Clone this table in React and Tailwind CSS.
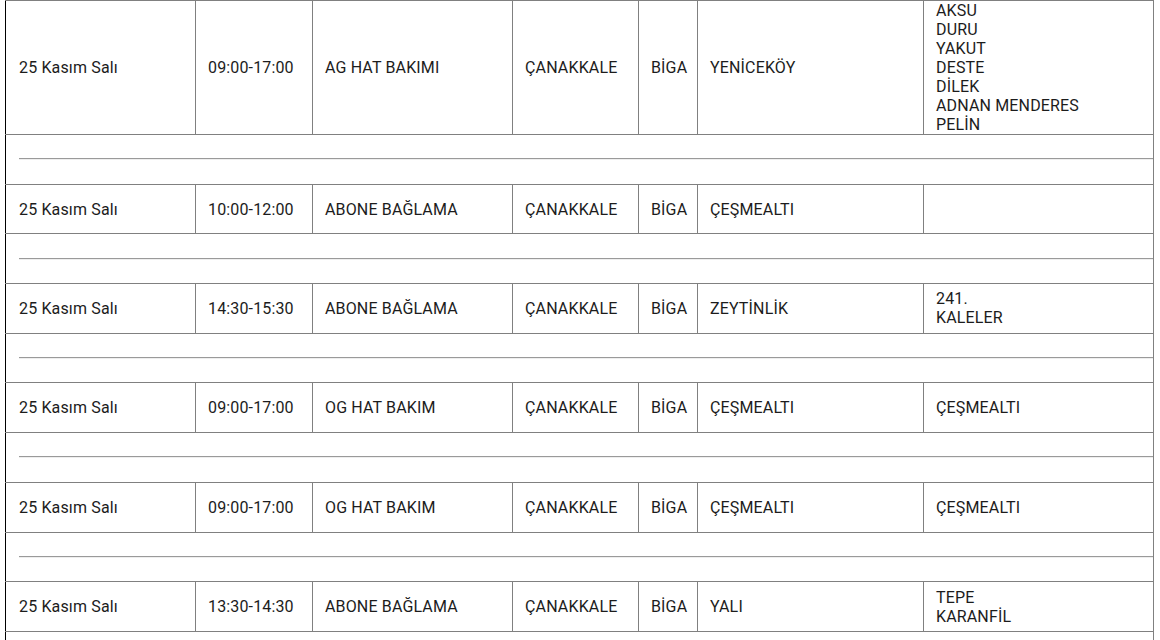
import React from "react";

const rows = [
  {
    tarih: "25 Kasım Salı",
    saat: "09:00-17:00",
    islem: "AG HAT BAKIMI",
    il: "ÇANAKKALE",
    ilce: "BİGA",
    mahalle: "YENİCEKÖY",
    sokaklar: ["AKSU", "DURU", "YAKUT", "DESTE", "DİLEK", "ADNAN MENDERES", "PELİN"],
  },
  {
    tarih: "25 Kasım Salı",
    saat: "10:00-12:00",
    islem: "ABONE BAĞLAMA",
    il: "ÇANAKKALE",
    ilce: "BİGA",
    mahalle: "ÇEŞMEALTI",
    sokaklar: [],
  },
  {
    tarih: "25 Kasım Salı",
    saat: "14:30-15:30",
    islem: "ABONE BAĞLAMA",
    il: "ÇANAKKALE",
    ilce: "BİGA",
    mahalle: "ZEYTİNLİK",
    sokaklar: ["241.", "KALELER"],
  },
  {
    tarih: "25 Kasım Salı",
    saat: "09:00-17:00",
    islem: "OG HAT BAKIM",
    il: "ÇANAKKALE",
    ilce: "BİGA",
    mahalle: "ÇEŞMEALTI",
    sokaklar: ["ÇEŞMEALTI"],
  },
  {
    tarih: "25 Kasım Salı",
    saat: "09:00-17:00",
    islem: "OG HAT BAKIM",
    il: "ÇANAKKALE",
    ilce: "BİGA",
    mahalle: "ÇEŞMEALTI",
    sokaklar: ["ÇEŞMEALTI"],
  },
  {
    tarih: "25 Kasım Salı",
    saat: "13:30-14:30",
    islem: "ABONE BAĞLAMA",
    il: "ÇANAKKALE",
    ilce: "BİGA",
    mahalle: "YALI",
    sokaklar: ["TEPE", "KARANFİL"],
  },
];

const td = "border border-[#808080] pl-[12px] pr-1 py-0 align-middle";

export default function App() {
  return (
    <div
      className="w-[1160px] h-[640px] overflow-hidden bg-white text-[16px] leading-[19px] tracking-[0.15px] text-[#1c1c1c]"
      style={{ fontFamily: "Roboto, 'Liberation Sans', sans-serif" }}
    >
      <table className="ml-[5px] w-[1148px] table-fixed border-collapse border-l border-l-black">
        <colgroup>
          <col className="w-[190px]" />
          <col className="w-[117px]" />
          <col className="w-[200px]" />
          <col className="w-[126px]" />
          <col className="w-[59px]" />
          <col className="w-[226px]" />
          <col className="w-[230px]" />
        </colgroup>
        <tbody>
          {rows.map((r, i) => (
            <React.Fragment key={i}>
              <tr className={i === 0 ? "h-[134px]" : "h-[49.7px]"}>
                <td className="border border-[#808080] border-l-black pl-[13px] pr-1 py-0 align-middle">
                  {r.tarih}
                </td>
                <td className={td}>{r.saat}</td>
                <td className={td}>{r.islem}</td>
                <td className={td}>{r.il}</td>
                <td className={td}>{r.ilce}</td>
                <td className={td}>{r.mahalle}</td>
                <td className={td}>
                  {r.sokaklar.map((s) => (
                    <div key={s}>{s}</div>
                  ))}
                </td>
              </tr>
              <tr className="h-[49.7px]">
                <td colSpan={7} className="border border-[#808080] border-l-black pl-[13px] pr-0 py-0 align-middle">
                  <div className="h-0 border-t border-b border-t-[#9a9a9a] border-b-[#eeeeee]" />
                </td>
              </tr>
            </React.Fragment>
          ))}
        </tbody>
      </table>
    </div>
  );
}
